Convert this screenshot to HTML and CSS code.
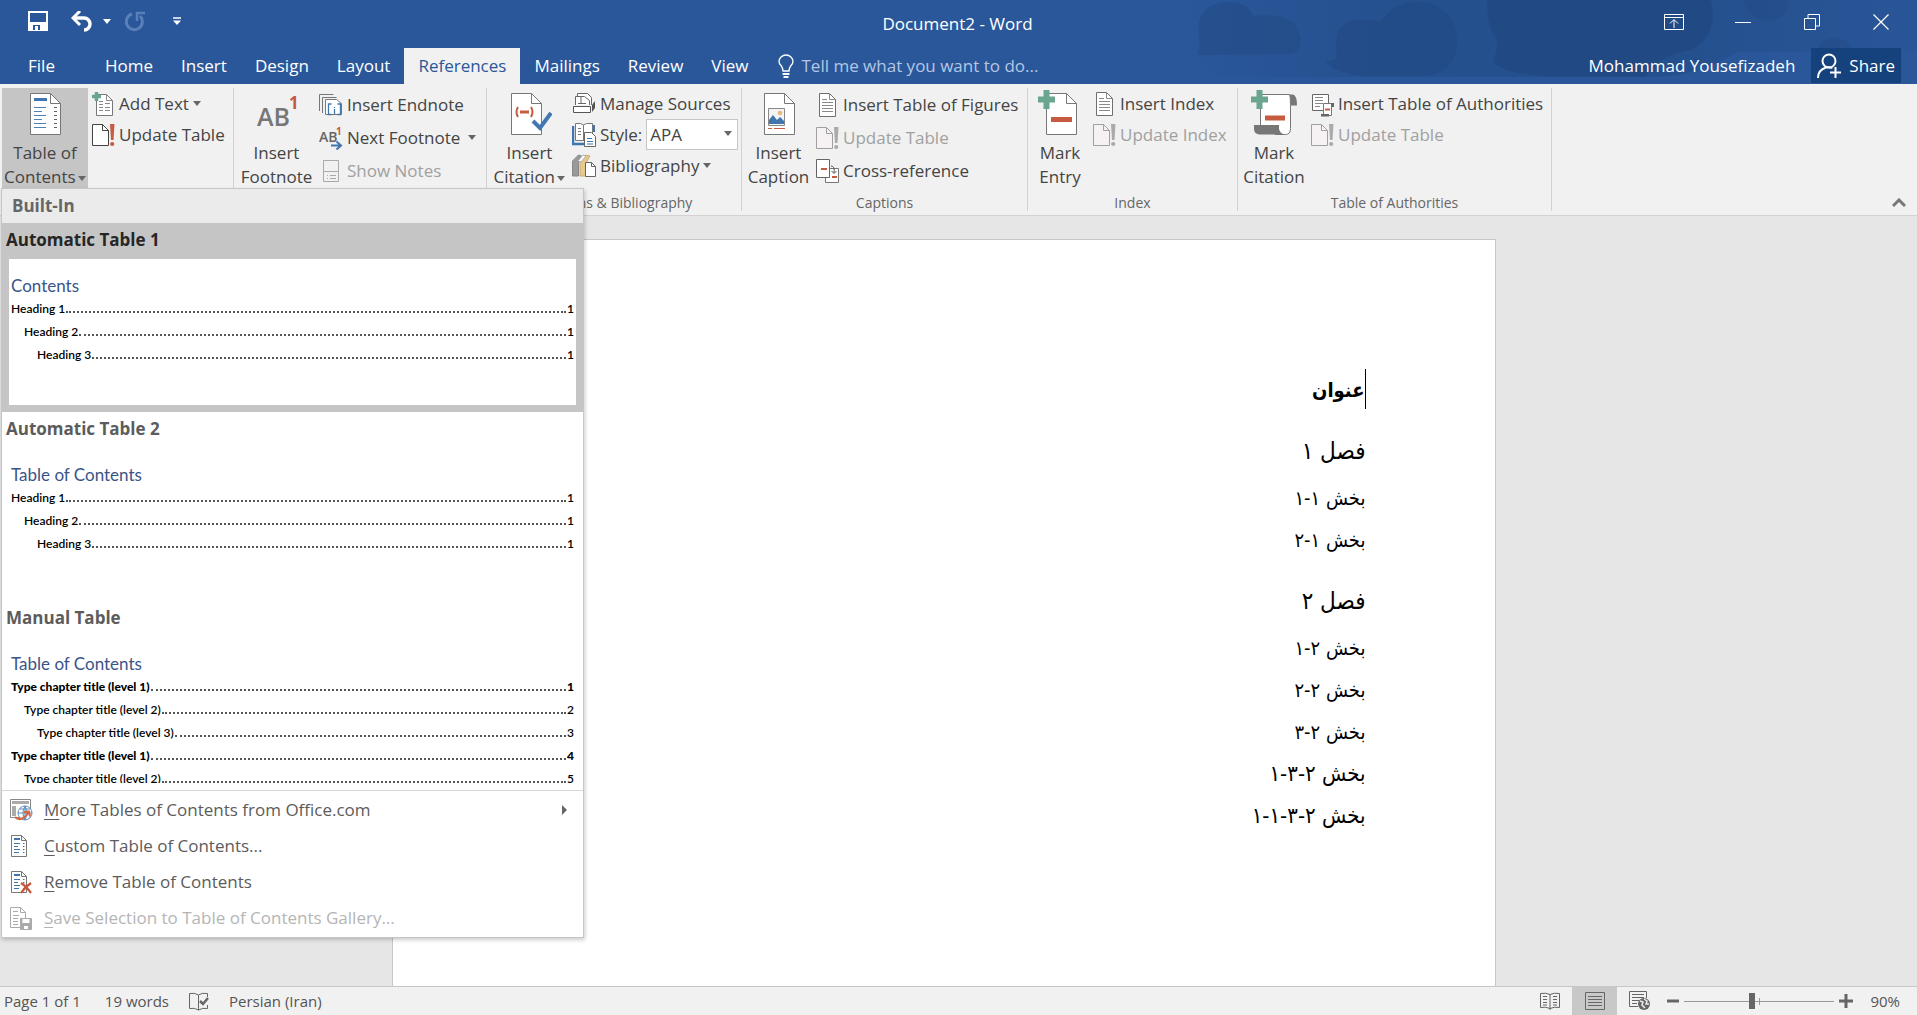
FILE: index.html
```html
<!DOCTYPE html>
<html lang="en">
<head>
<meta charset="utf-8">
<title>Document2 - Word</title>
<link rel="stylesheet" href="styles.css">
</head>
<body>
<svg class="defs" aria-hidden="true">
  <symbol id="caret" viewBox="0 0 8 5"><path d="M0 0h8L4 5z" fill="currentColor"/></symbol>
  <symbol id="update" viewBox="0 0 24 24"><path d="M1.500 1.500h10l6 6v15h-16z" fill="var(--paper)" stroke="currentColor"/><path d="M11.500 1.500v6h6" fill="none" stroke="currentColor"/><path d="M19 1h4.500l-1 16h-2.500z" fill="var(--mark)"/><circle cx="21.200" cy="21" r="2.100" fill="var(--mark)"/></symbol>
  <symbol id="lines" viewBox="0 0 24 26"><path d="M4.500 1.500h10l6 6v17h-16z" fill="#fff" stroke="#6f6f6f"/><path d="M14.500 1.500v6h6M7 7.500h5M7 10.500h11M7 13.500h11M7 16.500h11M7 19.500h11" fill="none" stroke="#8a8a8a"/></symbol>
  <symbol id="toc" viewBox="0 0 22 24"><path d="M2.500 1.500h10l5 5v16h-15z" fill="#fff" stroke="#777"/><path d="M12.500 1.500v5h5" fill="none" stroke="#777"/><path d="M5 5h6" stroke="#3f76ad" stroke-width="2"/><path d="M5 9.500h6M5 12.500h4M5 15.500h6M5 18.500h5" stroke="#3f76ad"/><path d="M14 9.500h1.500M14 12.500h1.500M14 15.500h1.500M14 18.500h1.500" stroke="#666"/></symbol>
</svg>

<header class="top">
  <svg class="art" viewBox="0 0 740 84" aria-hidden="true">
    <defs><linearGradient id="fade"><stop offset="0" stop-color="#204a84" stop-opacity="0"/><stop offset=".3" stop-color="#204a84" stop-opacity=".5"/><stop offset=".68" stop-color="#204a84" stop-opacity=".55"/><stop offset="1" stop-color="#204a84" stop-opacity=".1"/></linearGradient></defs>
    <path d="M0 0h740v52H560q-40 25-80 25H40q-40-20-40-77z" fill="url(#fade)"/>
    <g fill="#214982">
      <path opacity=".5" d="M20 55q4-10 2-20Q18 3 52 2q20 1 24 14 34-4 44 12 10 20-6 26z"/>
      <path opacity=".6" d="M148 60q10 2 12-4-6-36 22-36 12 0 22 1Q220 0 246 2q34 6 34 40 0 34-40 34h-50q-34-2-42-16z"/>
      <path opacity=".8" d="M310 0h224q8 36-20 50-30 4-46 27h-88q-52-2-64-15 4-10 4-22-10-10-10-40z"/>
      <path opacity=".35" d="M566 0h44q4 14-12 20-24 4-32-20z"/>
      <path opacity=".45" d="M640 50q6-14 20-12 14 2 16 14z"/>
    </g>
  </svg>
  <div class="titlebar">
    <div class="quick">
      <button aria-label="Save"><svg width="20" height="20"><path d="M1 1h18v18H1z" fill="none" stroke="#fff" stroke-width="2"/><path d="M2 11h16v8H2z" fill="#fff"/><path d="M5 14h10v5H5z" fill="#2a579a"/><path d="M7 15h3v4H7zM12 14h3v5h-3z" fill="#fff"/></svg></button>
      <button class="undo" aria-label="Undo"><svg width="22" height="21"><path d="M3 7h10a6 6 0 0 1 0 12" fill="none" stroke="#fff" stroke-width="3.500"/><path d="M9 0L2 7l7 7" fill="none" stroke="#fff" stroke-width="3"/></svg></button>
      <button class="undo-more" aria-label="Undo list"><svg width="8" height="5"><use href="#caret"/></svg></button>
      <button class="redo" aria-label="Redo"><svg width="21" height="21"><path d="M7 3a8 8 0 1 0 8 2" fill="none" stroke="#5a80ba" stroke-width="3"/><path d="M12 10V2h8" fill="none" stroke="#5a80ba" stroke-width="2.500"/></svg></button>
      <button class="customize" aria-label="Customize"><svg width="8" height="8"><path d="M0 1h8" stroke="#fff" stroke-width="1.500"/><path d="M0 3.500h8L4 8z" fill="#fff"/></svg></button>
    </div>
    <h1>Document2 - Word</h1>
    <div class="window">
      <button aria-label="Ribbon display"><svg width="20" height="16" fill="none" stroke="#fff"><path d="M.5.500h19v15H.5zM.5 3.500h19M10 14V6M6 9.500l4-4 4 4"/></svg></button>
      <button aria-label="Minimize"><svg width="16" height="16"><path d="M0 8.500h16" stroke="#fff"/></svg></button>
      <button aria-label="Restore"><svg width="16" height="16" fill="none" stroke="#fff"><path d="M.5 4.500h11v11H.5zM4 4V.500h11.500V12H12"/></svg></button>
      <button aria-label="Close"><svg width="16" height="16"><path d="M.5.500l15 15M15.500.500l-15 15" stroke="#fff" stroke-width="1.200"/></svg></button>
    </div>
  </div>
  <nav class="tabs">
    <button class="file">File</button>
    <button>Home</button><button>Insert</button><button>Design</button><button>Layout</button><button class="active">References</button><button>Mailings</button><button>Review</button><button>View</button>
    <label class="tell"><svg width="16" height="24" fill="none" stroke="#fff" stroke-width="1.300"><path d="M5 17q0-3-2-5.500Q1 9.500 1 7.500a7 6.500 0 0 1 14 0q0 2-2 4-2 2.500-2 5.500z"/><path d="M4.500 20h7M5.500 23h5" stroke-width="2"/></svg><input type="text" placeholder="Tell me what you want to do..." aria-label="Tell me what you want to do"></label>
    <span class="user">Mohammad Yousefizadeh</span>
    <button class="share"><svg width="24" height="26" fill="none" stroke="#fff" stroke-width="2"><circle cx="12" cy="8" r="6.500"/><path d="M1 25q0-8 8-10.500 5-1 6 1M13 19.500h11M18.500 14v11"/></svg>Share</button>
  </nav>
</header>

<section class="ribbon" aria-label="References">
  <div class="group toc-group">
    <div class="tools">
      <button class="big pressed"><svg width="44" height="45"><path d="M7.500 1.500h20l10 10v31h-30z" fill="#fff" stroke="#777"/><path d="M27.500 1.500v10h10" fill="none" stroke="#777"/><path d="M11 7.500h13" stroke="#3f76ad" stroke-width="3"/><path d="M11 15.500h12M11 19.500h8M11 23.500h12M11 27.500h8M11 31.500h12M11 35.500h12" stroke="#4f81b4"/><path d="M31 15.500h3M31 19.500h3M31 23.500h3M31 27.500h3M31 31.500h3M31 35.500h3" stroke="#666"/></svg><span>Table of<br>Contents <svg class="car"><use href="#caret"/></svg></span></button>
      <div class="stack">
        <button class="small"><svg width="24" height="26"><path d="M5.500 3.500h10l6 6v15h-16z" fill="#fff" stroke="#777"/><path d="M15.500 3.500v6h6M8 10.500h4M14 12.500h5M8 13.500h4M8 16.500h4M14 16.500h5M8 19.500h4M14 19.500h5" fill="none" stroke="#8a8a8a"/><path d="M5.500 1v9M1 5.500h9" stroke="#6aa68f" stroke-width="3.500"/></svg>Add Text <svg class="car"><use href="#caret"/></svg></button>
        <button class="small"><svg width="24" height="24"><use href="#update"/></svg>Update Table</button>
      </div>
    </div>
  </div>
  <div class="group notes-group">
    <div class="tools">
      <button class="big"><svg width="50" height="45"><text x="5" y="34" class="ab-big">AB</text><text x="37" y="17" class="one-big">1</text></svg><span>Insert<br>Footnote</span></button>
      <div class="stack wide">
        <button class="small"><svg width="24" height="24"><path d="M.5 18V1.500h14M3.500 20V4.500h14" fill="none" stroke="#777"/><path d="M6.500 6.500h11l5 4v11h-16z" fill="#fff" stroke="#777"/><path d="M12.500 11h-3v10.500h3M18.500 11h3v10.500h-3M15.500 14v1M15.500 16v5" fill="none" stroke="#3f76ad" stroke-width="1.300"/></svg>Insert Endnote</button>
        <button class="small"><svg width="24" height="24"><text x="0" y="16" class="ab">AB</text><text x="17" y="9" class="one">1</text><path d="M12 19.500h9M17.500 15.500l4.500 4-4.500 4" fill="none" stroke="#3f76ad" stroke-width="2"/></svg>Next Footnote <svg class="car apart"><use href="#caret"/></svg></button>
        <button class="small" disabled><svg width="24" height="24"><path d="M4.500 1.500h15v21h-15zM4.500 12.500h15M8 16.500h1M11 16.500h6M8 19.500h1M11 19.500h6" fill="none" stroke="#aaa"/></svg>Show Notes</button>
      </div>
    </div>
  </div>
  <div class="group cite-group">
    <div class="tools">
      <button class="big"><svg width="44" height="45"><path d="M3.500 1.500h20l10 10v31h-30z" fill="#fff" stroke="#777"/><path d="M23.500 1.500v10h10" fill="none" stroke="#777"/><path d="M10 15q-3 5 0 10M23 15q3 5 0 10" fill="none" stroke="#c65b41" stroke-width="2"/><path d="M12 20h9" stroke="#c65b41" stroke-width="3"/><path d="M25 29l7 7 11-15" fill="none" stroke="#4377b4" stroke-width="4"/></svg><span>Insert<br>Citation <svg class="car"><use href="#caret"/></svg></span></button>
      <div class="stack">
        <button class="small"><svg width="24" height="24"><path d="M5.500 5V1.500h10l4 4V13" fill="#fff" stroke="#666"/><path d="M3.500 13V4.500h9l5 4V13M9 4.500V12M6 11.500h8" fill="#fff" stroke="#666"/><path d="M1.500 14.500h17v6h-17z" fill="#fff" stroke="#555"/><path d="M20 13l3-4v7l-3 4z" fill="#555"/></svg>Manage Sources</button>
        <div class="small"><svg width="24" height="26"><path d="M1 4v18h11" fill="none" stroke="#3f76ad" stroke-width="2.500"/><path d="M3.500 1.500h5l3 1.500 3-1.500h6v17h-17z" fill="#fff" stroke="#777"/><path d="M11.500 3v16M6 6.500h3M6 9.500h3M6 12.500h3" stroke="#777"/><path d="M22 3v7" stroke="#3f76ad" stroke-width="2"/><path d="M12.500 10.500h7l4 4v10h-11z" fill="#fff" stroke="#666"/><path d="M15 16.500h5M15 19.500h6M15 22h6" stroke="#3f76ad"/></svg><label for="style">Style:</label><span class="pick"><select id="style"><option>APA</option><option>MLA</option></select><svg class="car"><use href="#caret"/></svg></span></div>
        <button class="small"><svg width="24" height="26"><path d="M.5 8l6-6 3 1-3 5v15h-6z" fill="#999" stroke="#888"/><path d="M8 8l6-6 4 1-3 5v15H8z" fill="#e6c98e" stroke="#c9ad74"/><path d="M6 8l5-6 3 1-5 6z" fill="#fff" stroke="#aaa"/><path d="M13.500 9.500h6l4 4v10h-10z" fill="#fff" stroke="#666"/><path d="M19.500 9.500v4h4" fill="none" stroke="#666"/></svg>Bibliography <svg class="car"><use href="#caret"/></svg></button>
      </div>
    </div>
    <h2>Citations &amp; Bibliography</h2>
  </div>
  <div class="group caption-group">
    <div class="tools">
      <button class="big"><svg width="44" height="45"><path d="M7.500 1.500h20l10 10v31h-30z" fill="#fff" stroke="#777"/><path d="M27.500 1.500v10h10" fill="none" stroke="#777"/><path d="M11.500 16.500h16v17h-16z" fill="#f4f4f4" stroke="#888"/><path d="M12 32v-4l4-5 4 5 3-3 4 4v3z" fill="#3f76ad"/><circle cx="23" cy="21" r="2.300" fill="#e3bd7b"/><path d="M11 36.500h4M17 36.500h11" stroke="#c65b41"/></svg><span>Insert<br>Caption</span></button>
      <div class="stack wide">
        <button class="small"><svg width="24" height="26"><use href="#lines"/></svg>Insert Table of Figures</button>
        <button class="small" disabled><svg width="24" height="24"><use href="#update"/></svg>Update Table</button>
        <button class="small"><svg width="24" height="26"><path d="M10.500 10.500h13v14h-13z" fill="#fff" stroke="#777"/><path d="M1.500 1.500h13v18h-13z" fill="#fff" stroke="#666"/><path d="M6 11h6M17 19h5" stroke="#c65b41" stroke-width="2"/><path d="M16 8q4 0 3 7M16.500 13l2.500 2.500 2.500-2.500" fill="none" stroke="#555"/></svg>Cross-reference</button>
      </div>
    </div>
    <h2>Captions</h2>
  </div>
  <div class="group index-group">
    <div class="tools">
      <button class="big"><svg width="44" height="46"><path d="M8.500 3.500h20l10 10v31h-30z" fill="#fff" stroke="#777"/><path d="M28.500 3.500v10h10" fill="none" stroke="#777"/><path d="M13 29.500h21" stroke="#c65b41" stroke-width="5"/><path d="M8.500 0v19M0 9.500h17" stroke="#6aa68f" stroke-width="6"/></svg><span>Mark<br>Entry</span></button>
      <div class="stack">
        <button class="small"><svg width="24" height="26"><use href="#lines"/></svg>Insert Index</button>
        <button class="small" disabled><svg width="24" height="24"><use href="#update"/></svg>Update Index</button>
      </div>
    </div>
    <h2>Index</h2>
  </div>
  <div class="group auth-group">
    <div class="tools">
      <button class="big"><svg width="46" height="46"><path d="M36 4.500h6q4 1 4 11h-7z" fill="#777"/><path d="M9.500 4.500h29q1 2 1 10v24q0 6-5 6h-10l-15-8z" fill="#fff" stroke="#777"/><path d="M3 35h25v4q1 4 5 5.500H8q-5-1-5-5.500z" fill="#777"/><path d="M14 28h20" stroke="#c65b41" stroke-width="5"/><path d="M8.500 0v19M0 9.500h17" stroke="#6aa68f" stroke-width="6"/></svg><span>Mark<br>Citation</span></button>
      <div class="stack">
        <button class="small"><svg width="24" height="26"><path d="M2.500 3.500h16v16h-16z" fill="#fff" stroke="#666"/><path d="M5 6.500h8M5 9.500h8M5 12.500h8M5 15.500h5" stroke="#888"/><path d="M13.500 12.500h8v12h-8z" fill="#fff" stroke="#777"/><path d="M21 12h3v4h-3zM11 23h8v2.500h-8z" fill="#666"/><path d="M15 18.500h5" stroke="#c65b41" stroke-width="2"/></svg>Insert Table of Authorities</button>
        <button class="small" disabled><svg width="24" height="24"><use href="#update"/></svg>Update Table</button>
      </div>
    </div>
    <h2>Table of Authorities</h2>
  </div>
  <button class="collapse" aria-label="Collapse the ribbon"><svg width="14" height="10"><path d="M1 8l6-6 6 6" fill="none" stroke="#777" stroke-width="3"/></svg></button>

  <div class="gallery">
    <h3>Built-In</h3>
    <button class="entry selected"><strong>Automatic Table 1</strong>
      <span class="preview"><em>Contents</em>
        <span class="row">Heading 1<i></i>1</span><span class="row l2">Heading 2<i></i>1</span><span class="row l3">Heading 3<i></i>1</span></span></button>
    <button class="entry"><strong>Automatic Table 2</strong>
      <span class="preview"><em>Table of Contents</em>
        <span class="row">Heading 1<i></i>1</span><span class="row l2">Heading 2<i></i>1</span><span class="row l3">Heading 3<i></i>1</span></span></button>
    <button class="entry"><strong>Manual Table</strong>
      <span class="preview"><em>Table of Contents</em>
        <span class="row heavy">Type chapter title (level 1)<i></i>1</span><span class="row l2">Type chapter title (level 2)<i></i>2</span><span class="row l3">Type chapter title (level 3)<i></i>3</span><span class="row heavy">Type chapter title (level 1)<i></i>4</span><span class="row l2">Type chapter title (level 2)<i></i>5</span></span></button>
    <div class="commands">
      <button><svg width="24" height="24"><path d="M1.500 1.500h20v18h-20z" fill="#fff" stroke="#888"/><path d="M3 4.500h17" stroke="#aaa" stroke-width="3"/><path d="M3 8h4v10H3z" fill="#aaa"/><circle cx="16" cy="15" r="7" fill="#fff" stroke="#5e8cc0"/><path d="M9 15h14M16 8v14M11 11h10M16 8q-4 7 0 14M16 8q4 7 0 14" fill="none" stroke="#5e8cc0"/><path d="M6 19q6 6 14-5M15 14l5-.5 1 5" fill="none" stroke="#d9663f" stroke-width="2"/></svg><span><u>M</u>ore Tables of Contents from Office.com</span><svg class="more" width="5" height="10"><path d="M0 0l5 5-5 5z" fill="#666"/></svg></button>
      <button><svg width="22" height="24"><use href="#toc" width="22" height="24"/></svg><span><u>C</u>ustom Table of Contents...</span></button>
      <button><svg width="24" height="24"><use href="#toc" width="22" height="24"/><path d="M12 13q5 3 10 10M22 13q-6 4-10 10" fill="none" stroke="#c9553a" stroke-width="2.200"/></svg><span><u>R</u>emove Table of Contents</span></button>
      <button disabled><svg width="24" height="24" fill="none" stroke="#aaa"><path d="M1.500 1.500h10l5 5v15h-15zM11.500 1.500v5h5M4 5.500h5M4 9.500h6M4 12.500h5M4 15.500h5M4 18.500h5"/><path d="M11.500 12.500h11v11h-11z" fill="#aaa"/><path d="M13.500 13h7v4h-7zM15 20h4v3h-4z" fill="#fff" stroke="none"/></svg><span><u>S</u>ave Selection to Table of Contents Gallery...</span></button>
    </div>
  </div>
</section>

<main class="canvas">
  <article class="page" lang="fa" dir="rtl">
    <h2 class="title"><span class="cursor"></span>عنوان</h2>
    <h3>فصل ۱</h3>
    <p>بخش ۱-۱</p>
    <p>بخش ۱-۲</p>
    <h3>فصل ۲</h3>
    <p>بخش ۲-۱</p>
    <p>بخش ۲-۲</p>
    <p>بخش ۲-۳</p>
    <p class="deep">بخش ۲-۳-۱</p>
    <p class="deep">بخش ۲-۳-۱-۱</p>
  </article>
</main>

<footer class="status">
  <span class="pages">Page 1 of 1</span><span>19 words</span>
  <svg class="proof" width="20" height="19" fill="none" stroke="#666"><path d="M9.500 3q-4-2.500-9-1.500v15q5-1 9 1.500zM9.500 3q3-2.500 9-1.500V5M18.500 13v3.500q-5-1-9 1.500"/><path d="M11 9l3 3 5-6" stroke-width="2.500"/></svg>
  <span>Persian (Iran)</span>
  <div class="views">
    <button aria-label="Read mode"><svg width="20" height="18" fill="none" stroke="#666"><path d="M10 2.500Q6 .5.500 1.500v14q5.500-1 9.500 1 4-2 9.500-1v-14Q14 .500 10 2.500zM10 2v16M3 4.500h4M3 7.500h4M3 10.500h4M3 13h4M13 4.500h4M13 7.500h4M13 10.500h4M13 13h4"/></svg></button>
    <button class="on" aria-label="Print layout"><svg width="20" height="18" fill="none" stroke="#666"><path d="M.5.500h19v17H.5zM3 4.500h14M3 7.500h14M3 10.500h14M3 13.500h14"/></svg></button>
    <button aria-label="Web layout"><svg width="22" height="20" fill="none" stroke="#666"><path d="M9 15.500H.5V.500h17V7M3 3.500h12M3 6.500h12M3 9.500h7M3 12.500h5"/><circle cx="15" cy="13" r="6" fill="#666" stroke="none"/><path d="M11 10l3 1-1 3 3 3M15 8l3 2-1 3h3" stroke="#eee" stroke-width="1.500"/></svg></button>
  </div>
  <button class="zoom" aria-label="Zoom out"><svg width="12" height="14"><path d="M0 7h12" stroke="#666" stroke-width="3"/></svg></button>
  <input class="slider" type="range" min="0" max="100" value="45" aria-label="Zoom">
  <button class="zoom" aria-label="Zoom in"><svg width="14" height="14"><path d="M0 7h14M7 0v14" stroke="#666" stroke-width="3"/></svg></button>
  <span class="percent">90%</span>
</footer>
</body>
</html>
```
FILE: styles.css
```css
* { box-sizing: border-box; }
body {
  --paper: #fff;
  --mark: #c65b41;
  margin: 0;
  min-height: 100vh;
  display: flex;
  flex-direction: column;
  font: 17px/24px "Open Sans", sans-serif;
  color: #444;
  background: #e6e6e6;
}
button, input, select { font: inherit; color: inherit; }
button { border: 0; padding: 0; background: none; }
h1, h2, h3, p { margin: 0; font: inherit; }
svg { flex: none; display: block; }
.defs { position: absolute; width: 0; height: 0; }
.car { display: inline-block; width: 8px; height: 5px; vertical-align: middle; color: #666; }

/* title bar and tabs */
.top { position: relative; background: #2a579a; color: #fff; }
.art { position: absolute; top: 0; right: 0; width: 740px; height: 84px; }
.titlebar { position: relative; display: grid; grid-template-columns: 1fr auto 1fr; height: 48px; align-items: center; padding-right: 2px; }
.quick { display: flex; align-items: center; padding: 0 0 6px 28px; }
.quick .undo { margin-left: 23px; }
.quick .undo-more { margin-left: 10px; }
.quick .redo { margin-left: 14px; }
.quick .customize { margin-left: 27px; }
.window { display: flex; justify-content: flex-end; padding-bottom: 4px; }
.window button { width: 69px; height: 40px; display: grid; place-items: center; }
.tabs { position: relative; display: flex; height: 36px; align-items: stretch; }
.tabs button { padding: 0 14px; }
.tabs .file { width: 91px; padding: 0 8px 0 0; }
.tabs .active { background: #f1f1f1; color: #2a579a; }
.tell { display: flex; align-items: center; gap: 7px; margin-left: 16px; }
.tell input { width: 260px; border: 0; padding: 0; background: none; outline: 0; }
.tell input::placeholder { color: #b4c7e4; opacity: 1; }
.user { margin-left: auto; padding: 6px 16px 0 0; }
.tabs .share { display: flex; align-items: center; gap: 8px; padding: 0 6px; margin: 0 16px 1px 0; background: #15417c; }

/* ribbon */
.ribbon { position: relative; display: flex; height: 132px; padding: 4px 0; background: #f1f1f1; border-bottom: 1px solid #d2d2d2; }
.group { display: flex; flex-direction: column; justify-content: space-between; border-right: 1px solid #d2d2d2; }
.group h2 { font-size: 14px; line-height: 16px; text-align: center; color: #666; }
.tools { display: flex; }
.big { display: flex; flex-direction: column; align-items: center; height: 101px; padding-top: 4px; white-space: nowrap; }
.big > span { margin-top: auto; }
.big .car { margin-left: -2px; }
.big.pressed { background: #c5c5c5; }
.stack { display: flex; flex-direction: column; }
.small { display: flex; align-items: center; gap: 4px; height: 31px; white-space: nowrap; }
.wide .small { height: 33px; }
.small:disabled { --paper: #f6f2f4; --mark: #aaa; color: #a0a0a0; }
.small .apart { margin-left: 4px; }
.toc-group { width: 234px; padding-left: 2px; }
.toc-group .big { width: 86px; margin-right: 3px; }
.notes-group { width: 253px; }
.notes-group .big, .cite-group .big { width: 85px; }
.cite-group { width: 255px; }
.caption-group { width: 286px; }
.caption-group .big { width: 73px; }
.index-group { width: 210px; }
.index-group .big { width: 64px; padding-top: 2px; }
.auth-group { width: 314px; }
.auth-group .big { width: 72px; padding-top: 2px; }
.ab-big { font-size: 25px; font-weight: 600; fill: #777; }
.one-big { font-size: 17px; font-weight: 700; fill: #c65b41; }
.ab { font-size: 14px; font-weight: 600; fill: #666; }
.one { font-size: 10px; font-weight: 700; fill: #c65b41; }
.pick { position: relative; display: block; }
.pick select { appearance: none; width: 92px; height: 31px; padding: 0 3px; border: 1px solid #c6c6c6; border-radius: 0; background: #fff; }
.pick .car { position: absolute; right: 6px; top: 12px; }
.collapse { align-self: flex-end; margin: 0 11px 3px auto; }

/* table of contents gallery */
.gallery { position: absolute; z-index: 2; left: 1px; top: 104px; width: 583px; background: #fff; border: 1px solid #c6c6c6; box-shadow: 1px 2px 4px #0003; color: #5c5c5c; }
.gallery h3 { height: 34px; padding: 0 10px; line-height: 34px; font-weight: 700; color: #666; background: #ebebeb; }
.entry { display: block; width: 100%; padding: 0 7px 7px; text-align: left; }
.entry strong { display: block; height: 36px; margin-left: -3px; line-height: 33px; }
.selected { background: #c5c5c5; }
.selected strong { color: #262626; }
.preview { display: block; height: 146px; overflow: hidden; padding: 16px 2px 0; background: #fff; font: 12px/23px Lato, sans-serif; color: #000; }
.preview em { display: block; font-size: 17px; line-height: 22px; font-style: normal; color: #3a5488; }
.row { display: flex; font-weight: 600; }
.row i { flex: 1; height: 16px; margin: 0 1px; border-bottom: 2px dotted #555; }
.l2 { padding-left: 13px; }
.l3 { padding-left: 26px; }
.heavy { font-weight: 900; }
.commands { border-top: 1px solid #d8d8d8; padding: 1px 0; }
.commands button { display: flex; width: 100%; height: 36px; align-items: center; padding-left: 7px; text-align: left; }
.commands span { flex: 1; }
.commands button > svg:first-child { width: 24px; margin-right: 11px; }
.commands .more { margin-right: 16px; }
.commands button:disabled { color: #b5b5b5; }
u { text-underline-offset: 3px; text-decoration-thickness: 1px; }

/* document */
.canvas { flex: 1; display: flex; justify-content: center; padding: 23px 30px 0 0; }
.page { width: 1104px; padding: 129px 129px 0 0; background: #fff; border: 1px solid #c6c6c6; border-bottom: 0; color: #000; font: 20px/42px "DejaVu Sans Condensed", "DejaVu Sans", sans-serif; }
.page .title { display: flex; font-weight: 700; line-height: 42px; }
.cursor { width: 1px; height: 40px; background: #000; }
.page h3 { font-size: 24px; line-height: 44px; margin: 18px 0 4px; }
.page .deep { font-size: 22px; }

/* status bar */
.status { display: flex; align-items: center; height: 29px; background: #f1f1f1; border-top: 1px solid #c6c6c6; font-size: 15px; color: #555; }
.pages { margin: 0 24px 0 4px; }
.proof { margin: 0 20px; }
.views { display: flex; align-self: stretch; margin-left: auto; }
.views button { width: 45px; display: grid; place-items: center; }
.views .on { background: #c8c8c8; }
.zoom { margin: 0 5px; }
.slider { appearance: none; width: 150px; height: 18px; margin: 0; background: linear-gradient(#999, #999) center / 100% 1px no-repeat, linear-gradient(#999, #999) 50% 50% / 1px 7px no-repeat; }
.slider::-webkit-slider-thumb { appearance: none; width: 6px; height: 16px; background: #666; }
.percent { margin: 0 17px 0 12px; }
```
